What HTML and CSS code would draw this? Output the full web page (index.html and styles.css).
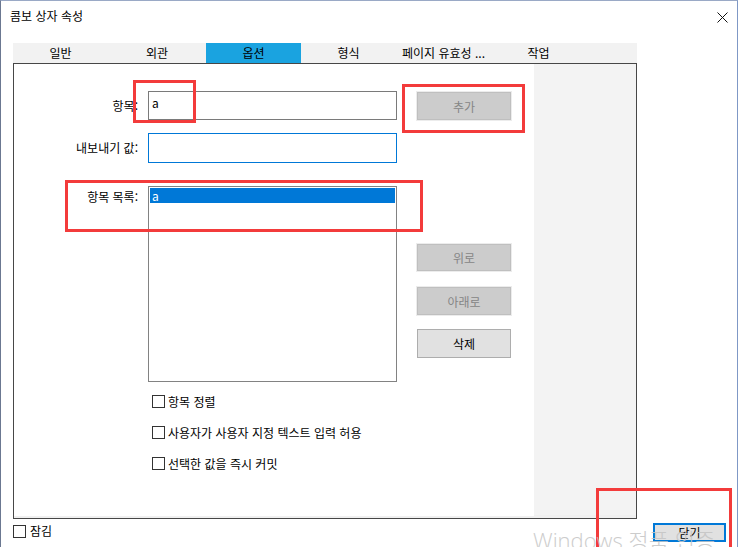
FILE: index.html
```html
<!DOCTYPE html>
<html lang="ko">
<head>
    <meta charset="UTF-8">
    <title>콤보 상자 속성</title>
    <link rel="stylesheet" href="styles.css">
</head>
<body>
    <div class="window">
        <div class="titlebar">
            <span class="title">콤보 상자 속성</span>
            <svg class="close" width="11" height="11" viewBox="0 0 11 11">
                <path d="M0.5 0.5 L10.5 10.5 M10.5 0.5 L0.5 10.5" stroke="#111" stroke-width="1" fill="none"/>
            </svg>
        </div>

        <div class="tabs">
            <div class="tab">일반</div>
            <div class="tab wide">외관</div>
            <div class="tab active">옵션</div>
            <div class="tab">형식</div>
            <div class="tab">페이지 유효성 ...</div>
            <div class="tab">작업</div>
        </div>

        <div class="panel">
            <div class="content">
                <div class="row row-item">
                    <div class="label">항목:</div>
                    <div class="field">a</div>
                    <button class="btn disabled add">추가</button>
                </div>
                <div class="row row-export">
                    <div class="label">내보내기 값:</div>
                    <div class="field focus"></div>
                </div>
                <div class="row row-list">
                    <div class="label top">항목 목록:</div>
                    <div class="listbox">
                        <div class="list-item selected">a</div>
                    </div>
                    <div class="btn-col">
                        <button class="btn disabled up">위로</button>
                        <button class="btn disabled down">아래로</button>
                        <button class="btn del">삭제</button>
                    </div>
                </div>
                <div class="checks">
                    <label class="check"><span class="box"></span>항목 정렬</label>
                    <label class="check"><span class="box"></span>사용자가 사용자 지정 텍스트 입력 허용</label>
                    <label class="check"><span class="box"></span>선택한 값을 즉시 커밋</label>
                </div>
            </div>
            <div class="side"></div>
        </div>

        <div class="footer">
            <label class="check"><span class="box"></span>잠김</label>
            <button class="btn close-btn">닫기</button>
        </div>
    </div>

    <!-- annotation boxes drawn over the dialog -->
    <div class="mark mark-item"></div>
    <div class="mark mark-add"></div>
    <div class="mark mark-list"></div>
    <div class="mark mark-close"></div>

    <div class="watermark">Windows 정품 인증</div>
</body>
</html>
```

FILE: styles.css
```css
body {
    margin: 0;
    width: 739px;
    height: 547px;
    overflow: hidden;
    background-color: #ffffff;
    font-family: "Noto Sans CJK KR", "Noto Sans", sans-serif;
    font-size: 12px;
    color: #000;
    position: relative;
}
.window {
    width: 738px;
    height: 547px;
    box-sizing: border-box;
    border-left: 1px solid #6b7891;
    border-right: 1px solid #7f98c6;
    border-top: 1px solid #9aa9c6;
    background-color: #fff;
}
.titlebar {
    height: 42px;
    display: flex;
    align-items: flex-start;
    justify-content: space-between;
    padding: 7px 9px 0 9px;
    box-sizing: border-box;
}
.title {
    line-height: 16px;
}
.close {
    margin-top: 4px;
}
.tabs {
    margin-left: 12px;
    width: 624px;
    height: 20px;
    display: flex;
    background-color: #f2f2f2;
}
.tab {
    width: 95px;
    line-height: 20px;
    text-align: center;
}
.tab.wide {
    width: 98px;
}
.tab.active {
    background-color: #1aa3e0;
}
.panel {
    margin-left: 12px;
    width: 624px;
    height: 456px;
    box-sizing: border-box;
    border: 1px solid #474747;
    display: flex;
    background-color: #f0f0f0;
}
.content {
    width: 520px;
    height: 452px;
    background-color: #fff;
    padding-top: 27px;
    box-sizing: border-box;
}
.side {
    width: 102px;
    height: 451px;
    background-color: #f3f3f3;
}
.row {
    display: flex;
}
.label {
    width: 134px;
    padding-right: 10px;
    box-sizing: border-box;
    text-align: right;
    line-height: 16px;
    align-self: center;
}
.label.top {
    align-self: flex-start;
    padding-top: 3px;
}
.row-item {
    height: 29px;
}
.row-export {
    height: 30px;
    margin-top: 13px;
}
.row-list {
    height: 196px;
    margin-top: 23px;
}
.field {
    width: 249px;
    box-sizing: border-box;
    border: 1px solid #7a7a7a;
    padding: 3px 0 0 3px;
    line-height: 16px;
}
.field.focus {
    border-color: #0078d7;
}
.listbox {
    width: 249px;
    box-sizing: border-box;
    border: 1px solid #828282;
    padding: 1px;
}
.list-item {
    height: 15px;
    line-height: 15px;
    padding-left: 2px;
}
.list-item.selected {
    background-color: #0078d7;
    color: #fff;
}
.btn {
    font-family: inherit;
    font-size: 12px;
    width: 94px;
    margin: 0;
    padding: 0;
    box-sizing: border-box;
    border: 1px solid #adadad;
    background-color: #e1e1e1;
    color: #000;
}
.btn.disabled {
    background-color: #cccccc;
    border-color: #bfbfbf;
    color: #858585;
    box-shadow: 0 0 0 1px #ececec;
}
.add {
    height: 28px;
    margin: 1px 0 0 20px;
}
.btn-col {
    margin-left: 20px;
    padding-top: 58px;
    display: flex;
    flex-direction: column;
}
.up {
    height: 27px;
}
.down {
    height: 28px;
    margin-top: 16px;
}
.del {
    height: 29px;
    margin-top: 14px;
}
.checks {
    margin: 13px 0 0 138px;
    display: flex;
    flex-direction: column;
    gap: 18px;
}
.check {
    display: flex;
    align-items: center;
    height: 13px;
    line-height: 16px;
}
.box {
    width: 13px;
    height: 13px;
    box-sizing: border-box;
    border: 1px solid #333;
    background-color: #fff;
    margin-right: 3px;
    flex-shrink: 0;
}
.footer {
    display: flex;
    justify-content: space-between;
    align-items: center;
    height: 24px;
    padding: 0 11px 0 12px;
    margin-top: 0;
}
.footer .check .box {
    margin-right: 4px;
}
.close-btn {
    width: 73px;
    height: 19px;
    line-height: 15px;
    border: 2px solid #0078d7;
    margin-top: 3px;
}
.mark {
    position: absolute;
    border: 3px solid #f33b3b;
    box-sizing: border-box;
}
.mark-item {
    left: 133px;
    top: 80px;
    width: 63px;
    height: 43px;
}
.mark-add {
    left: 402px;
    top: 84px;
    width: 123px;
    height: 49px;
}
.mark-list {
    left: 65px;
    top: 180px;
    width: 358px;
    height: 52px;
}
.mark-close {
    left: 596px;
    top: 488px;
    width: 136px;
    height: 70px;
}
.watermark {
    position: absolute;
    left: 533px;
    top: 526px;
    font-family: "Open Sans", "Noto Sans CJK KR", sans-serif;
    font-weight: 300;
    font-size: 22px;
    line-height: 28px;
    color: #c4c4c4;
    white-space: nowrap;
    opacity: 0.85;
}
```
